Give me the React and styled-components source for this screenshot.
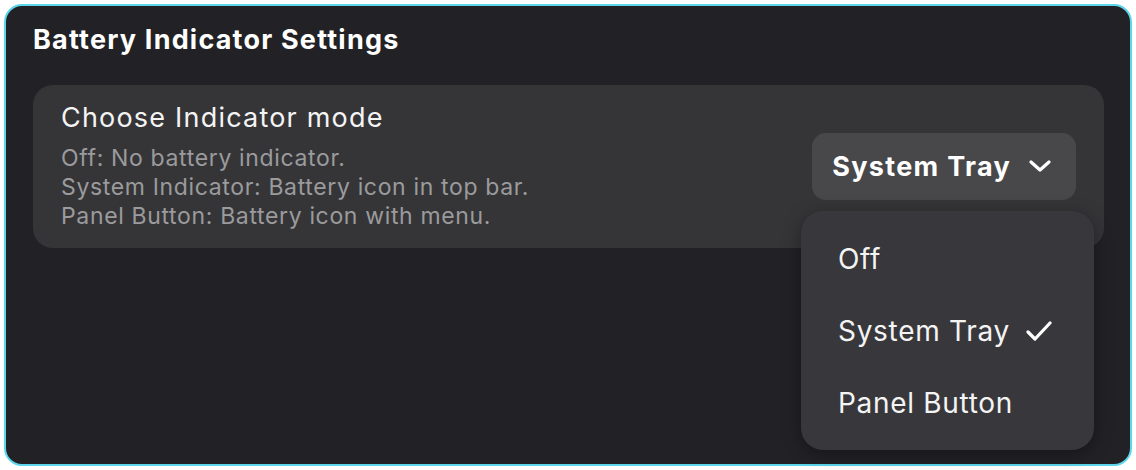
import styled, { createGlobalStyle } from "styled-components";

const Global = createGlobalStyle`
    html, body {
        margin: 0;
        padding: 0;
        background: #ffffff;
    }
    body {
        font-family: Inter, "Noto Sans", sans-serif;
    }
`;

const Ventana = styled.div`
    box-sizing: border-box;
    margin: 4px;
    width: 1128px;
    height: 462px;
    padding: 18px 26px 0 27px;
    background: #222226;
    border: 2px solid #5bd6ea;
    border-radius: 18px;
    color: #ffffff;
`;

const Titulo = styled.h1`
    margin: 0;
    font-size: 27px;
    line-height: 32px;
    font-weight: 700;
    letter-spacing: 1.2px;
    color: #ffffff;
`;

const Tarjeta = styled.div`
    margin-top: 29px;
    display: flex;
    justify-content: space-between;
    align-items: center;
    padding: 16px 28px 17px;
    background: #353538;
    border-radius: 20px;
`;

const Textos = styled.div`
    display: flex;
    flex-direction: column;
`;

const Nombre = styled.div`
    font-size: 27px;
    line-height: 34px;
    letter-spacing: 1.2px;
    color: #f4f4f4;
    margin-bottom: 9px;
`;

const Linea = styled.div`
    font-size: 23px;
    line-height: 29px;
    letter-spacing: 0.65px;
    color: #9b9b9d;
`;

const Selector = styled.div`
    position: relative;
`;

const Boton = styled.button`
    display: flex;
    align-items: center;
    gap: 18px;
    box-sizing: border-box;
    height: 67px;
    padding: 0 25px 0 20px;
    border: none;
    border-radius: 14px;
    background: #48484b;
    color: #ffffff;
    font-family: inherit;
    font-size: 27px;
    font-weight: 700;
    letter-spacing: 1.3px;
`;

const Menu = styled.ul`
    position: absolute;
    top: 78px;
    right: -18px;
    width: 293px;
    box-sizing: border-box;
    margin: 0;
    padding: 12px 0 11px;
    list-style: none;
    background: #38383c;
    border-radius: 22px;
    box-shadow: 0 4px 18px rgba(0, 0, 0, 0.35);
`;

const Opcion = styled.li`
    display: flex;
    align-items: center;
    gap: 16px;
    height: 72px;
    padding-left: 37px;
    font-size: 28px;
    letter-spacing: 0.7px;
    color: #f4f4f4;
`;

const Chevron = () => (
    <svg width="22" height="12" viewBox="0 0 22 12" fill="none">
        <path d="M2 2 L11 10 L20 2" stroke="#fff" strokeWidth="3.2" strokeLinecap="round" strokeLinejoin="round" />
    </svg>
);

const Check = () => (
    <svg width="26" height="20" viewBox="0 0 26 20" fill="none">
        <path d="M2 11 L9 18 L24 2" stroke="#fff" strokeWidth="3.2" strokeLinecap="round" strokeLinejoin="round" />
    </svg>
);

const opciones = ["Off", "System Tray", "Panel Button"];

export default function App() {
    const actual = "System Tray";

    return (
        <>
            <Global />
            <Ventana>
                <Titulo>Battery Indicator Settings</Titulo>
                <Tarjeta>
                    <Textos>
                        <Nombre>Choose Indicator mode</Nombre>
                        <Linea>Off: No battery indicator.</Linea>
                        <Linea>System Indicator: Battery icon in top bar.</Linea>
                        <Linea>Panel Button: Battery icon with menu.</Linea>
                    </Textos>
                    <Selector>
                        <Boton>
                            {actual}
                            <Chevron />
                        </Boton>
                        <Menu>
                            {opciones.map((o) => (
                                <Opcion key={o}>
                                    {o}
                                    {o === actual && <Check />}
                                </Opcion>
                            ))}
                        </Menu>
                    </Selector>
                </Tarjeta>
            </Ventana>
        </>
    );
}
